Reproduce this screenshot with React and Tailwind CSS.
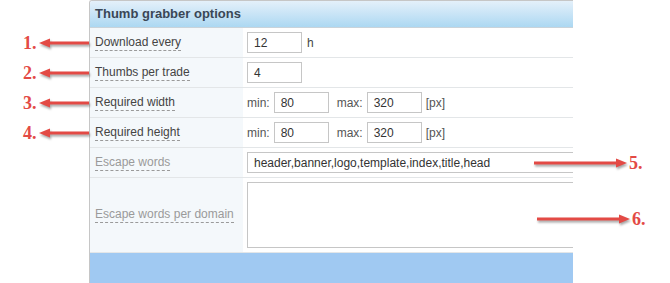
const Arrow = ({ dir = "left", width = 50 }) => (
    <svg
        width={width}
        height="12"
        viewBox={`0 0 ${width} 12`}
        className="drop-shadow-[1px_2px_1px_rgba(0,0,0,0.35)]"
    >
        {dir === "left" ? (
            <>
                <rect x="8" y="4.5" width={width - 8} height="3" fill="#e34a45" />
                <polygon points="0,6 11,1.5 11,10.5" fill="#e34a45" />
            </>
        ) : (
            <>
                <rect x="0" y="4.5" width={width - 8} height="3" fill="#e34a45" />
                <polygon points={`${width},6 ${width - 11},1.5 ${width - 11},10.5`} fill="#e34a45" />
            </>
        )}
    </svg>
);

const Note = ({ n, side, top, left }) => (
    <div
        className="absolute flex items-center gap-[2px]"
        style={{ top, left }}
    >
        {side === "left" ? (
            <>
                <span className="font-['Liberation_Serif',serif] font-bold text-[18px] leading-none text-[#e34a45]">
                    {n}.
                </span>
                <Arrow dir="left" width={50} />
            </>
        ) : (
            <>
                <Arrow dir="right" width={93} />
                <span className="font-['Liberation_Serif',serif] font-bold text-[18px] leading-none text-[#e34a45]">
                    {n}.
                </span>
            </>
        )}
    </div>
);

const Label = ({ children, muted }) => (
    <span
        className={`border-b border-dashed border-[#9a9a9a] leading-[15px] ${
            muted ? "text-[#9a9a9a]" : "text-[#444]"
        }`}
    >
        {children}
    </span>
);

const Field = ({ value, w = "w-[55px]" }) => (
    <div className={`${w} h-[21px] border border-[#c6c6c6] bg-white pl-[6px] flex items-center text-[#333]`}>
        {value}
    </div>
);

const Row = ({ label, muted, h = "h-[30px]", children }) => (
    <div className={`flex ${h} border-b border-[#e3e6e8]`}>
        <div className="w-[153px] shrink-0 bg-[#f4f8fb] flex items-center pl-[5px]">
            <Label muted={muted}>{label}</Label>
        </div>
        <div className="flex-1 flex items-center pl-[4px] gap-[4px] whitespace-nowrap">
            {children}
        </div>
    </div>
);

export default function App() {
    return (
        <div className="relative w-[670px] h-[283px] bg-white overflow-hidden font-['Liberation_Sans',Arial,sans-serif] text-[12px]">
            <div className="ml-[89px] w-[484px] h-[283px] flex flex-col border-l border-t border-[#c6c6c6] rounded-tl-[3px] overflow-hidden">
                <div className="h-[27px] shrink-0 bg-gradient-to-b from-[#e4f0fa] to-[#acd8f2] border-b border-[#c9d3da] flex items-center pl-[5px] font-bold text-[13px] text-[#3a4756]">
                    Thumb grabber options
                </div>
                <Row label="Download every">
                    <Field value="12" />
                    <span className="text-[#444] ml-[1px]">h</span>
                </Row>
                <Row label="Thumbs per trade">
                    <Field value="4" />
                </Row>
                <Row label="Required width">
                    <span className="text-[#555]">min:</span>
                    <Field value="80" />
                    <span className="text-[#555] ml-[4px]">max:</span>
                    <Field value="320" />
                    <span className="text-[#555]">[px]</span>
                </Row>
                <Row label="Required height">
                    <span className="text-[#555]">min:</span>
                    <Field value="80" />
                    <span className="text-[#555] ml-[4px]">max:</span>
                    <Field value="320" />
                    <span className="text-[#555]">[px]</span>
                </Row>
                <Row label="Escape words" muted>
                    <Field value="header,banner,logo,template,index,title,head" w="w-[360px]" />
                </Row>
                <Row label="Escape words per domain" muted h="h-[75px]">
                    <div className="w-[360px] h-[66px] border border-[#c6c6c6] bg-white" />
                </Row>
                <div className="flex-1 bg-[#a0c9f2]" />
            </div>

            <Note n="1" side="left" top={34} left={23} />
            <Note n="2" side="left" top={64} left={23} />
            <Note n="3" side="left" top={94} left={23} />
            <Note n="4" side="left" top={124} left={23} />
            <Note n="5" side="right" top={154} left={534} />
            <Note n="6" side="right" top={210} left={537} />
        </div>
    );
}
